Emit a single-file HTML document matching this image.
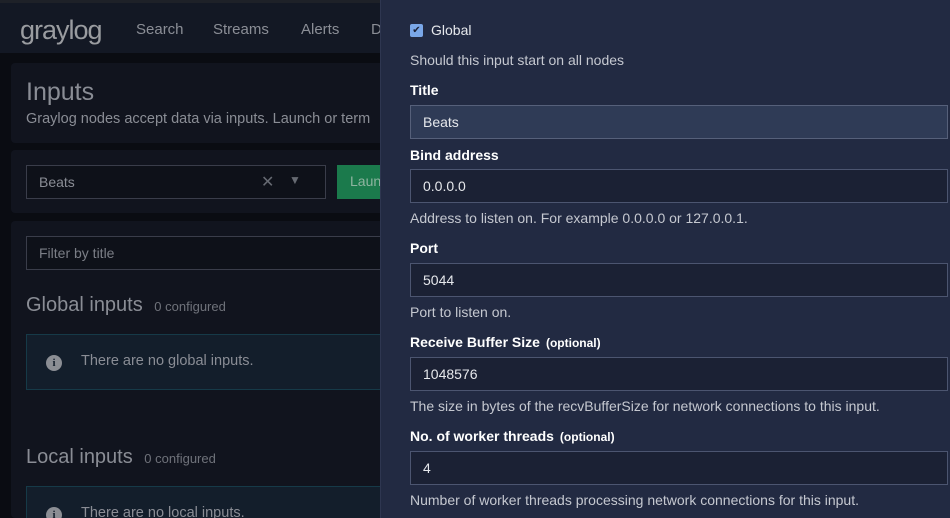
<!DOCTYPE html>
<html style="overflow:hidden;height:518px"><head><style>
*{box-sizing:border-box;margin:0;padding:0}
body{width:950px;height:518px;overflow:hidden;background:#0a0c12;font-family:"Liberation Sans",sans-serif;position:relative}
.nav{position:absolute;left:0;top:3px;width:950px;height:50px;background:#131824}
.topline{position:absolute;left:0;top:0;width:950px;height:3px;background:#1e2128}
.logo{position:absolute;left:20px;top:12px;font-size:27px;color:#9a9ca0;letter-spacing:-1px}
.nl{position:absolute;top:18px;font-size:15px;color:#8b8e96}
.panel{position:absolute;left:11px;width:380px;background:#11141e;border-radius:4px;overflow:hidden}
.t{position:absolute;color:#8a8d95;white-space:nowrap}
.box{position:absolute;border:1px solid #3a3d4a;background:#0e1119}
.alert{position:absolute;left:26px;width:360px;height:56px;background:#131e2b;border:1px solid #163a48}
.icon{position:absolute;left:19px;top:20px;width:16px;height:16px;border-radius:50%;background:#8b8e94;color:#131e2b;font:bold 11px "Liberation Serif",serif;text-align:center;line-height:16px}
.modal{position:absolute;left:380px;top:0;width:570px;height:518px;background:#222a42;border-left:1px solid #2e3650;overflow:hidden}
.m{position:absolute;left:29px;color:#c5c8d0;font-size:14px;white-space:nowrap}
.lbl{position:absolute;left:29px;color:#fff;font-size:14px;font-weight:bold}
.lbl span{font-size:12px;font-weight:bold;margin-left:6px}
.inp{position:absolute;left:29px;width:538px;height:34px;border:1px solid #4c5570;background:#1b2134;color:#e6e8ec;font-size:14px;padding:8px 12px}
</style></head><body>
<div class="topline"></div>
<div class="nav">
<div class="logo">graylog</div>
<div class="nl" style="left:136px">Search</div>
<div class="nl" style="left:213px">Streams</div>
<div class="nl" style="left:301px">Alerts</div>
<div class="nl" style="left:371px">D</div>
</div>
<div class="panel" style="top:63px;height:80px">
<div class="t" style="left:15px;top:15px;font-size:25px">Inputs</div>
<div class="t" style="left:15px;top:48px;font-size:14.5px">Graylog nodes accept data via inputs. Launch or term</div>
</div>
<div class="panel" style="top:150px;height:63px">
<div class="box" style="left:15px;top:15px;width:300px;height:34px"><span class="t" style="left:12px;top:8px;font-size:14px">Beats</span><span class="t" style="left:234px;top:6px;font-size:16px;color:#666a72">✕</span><span class="t" style="left:262px;top:7px;font-size:12px;color:#666a72">▼</span></div>
<div style="position:absolute;left:326px;top:15px;width:60px;height:34px;background:#1b7a4c"><span class="t" style="left:13px;top:8px;font-size:14px;color:#8fb4a0">Laun</span></div>
</div>
<div class="panel" style="top:221px;height:297px">
<div class="box" style="left:15px;top:15px;width:370px;height:34px"><span class="t" style="left:12px;top:8px;font-size:14px;color:#7b7e86">Filter by title</span></div>
<div class="t" style="left:15px;top:73px;font-size:20px">Global inputs <span style="font-size:13px;margin-left:6px;color:#6f727a">0 configured</span></div>
<div class="alert" style="left:15px;top:113px"><div class="icon">i</div><span class="t" style="left:54px;top:18px;font-size:14.5px">There are no global inputs.</span></div>
<div class="t" style="left:15px;top:225px;font-size:20px">Local inputs <span style="font-size:13px;margin-left:6px;color:#6f727a">0 configured</span></div>
<div class="alert" style="left:15px;top:265px"><div class="icon">i</div><span class="t" style="left:54px;top:18px;font-size:14.5px">There are no local inputs.</span></div>
</div>
<div class="modal">
<div style="position:absolute;left:29px;top:24px;width:13px;height:13px;background:#7aa7e8;border-radius:2px;color:#1a2035;font-size:10px;line-height:13px;text-align:center">✔</div>
<div class="m" style="left:50px;top:22px;color:#e6e8ec">Global</div>
<div class="m" style="top:52px">Should this input start on all nodes</div>
<div class="lbl" style="top:82px">Title</div>
<div class="inp" style="top:105px;background:#2f3b56;border-color:#56607a">Beats</div>
<div class="lbl" style="top:147px">Bind address</div>
<div class="inp" style="top:169px">0.0.0.0</div>
<div class="m" style="top:210px">Address to listen on. For example 0.0.0.0 or 127.0.0.1.</div>
<div class="lbl" style="top:240px">Port</div>
<div class="inp" style="top:263px">5044</div>
<div class="m" style="top:304px">Port to listen on.</div>
<div class="lbl" style="top:334px">Receive Buffer Size<span>(optional)</span></div>
<div class="inp" style="top:357px">1048576</div>
<div class="m" style="top:398px">The size in bytes of the recvBufferSize for network connections to this input.</div>
<div class="lbl" style="top:428px">No. of worker threads<span>(optional)</span></div>
<div class="inp" style="top:451px">4</div>
<div class="m" style="top:492px">Number of worker threads processing network connections for this input.</div>
</div>
</body></html>
